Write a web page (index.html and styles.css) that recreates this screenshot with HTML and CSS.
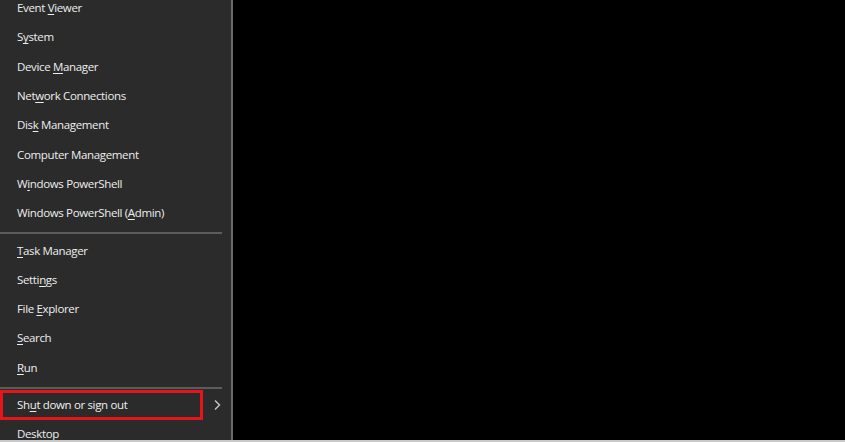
FILE: index.html
```html
<!DOCTYPE html>
<html lang="en">
<head>
    <meta charset="UTF-8">
    <title>Quick Link Menu</title>
    <link rel="stylesheet" href="styles.css">
</head>
<body>
    <div class="screen">
        <nav class="menu">
            <ul class="group">
                <li class="item"><span>Event <u>V</u>iewer</span></li>
                <li class="item"><span>S<u>y</u>stem</span></li>
                <li class="item"><span>Device <u>M</u>anager</span></li>
                <li class="item"><span>Net<u>w</u>ork Connections</span></li>
                <li class="item"><span>Dis<u>k</u> Management</span></li>
                <li class="item"><span>Computer Mana<u>g</u>ement</span></li>
                <li class="item"><span>W<u>i</u>ndows PowerShell</span></li>
                <li class="item"><span>Windows PowerShell (<u>A</u>dmin)</span></li>
            </ul>
            <hr class="divider">
            <ul class="group">
                <li class="item"><span><u>T</u>ask Manager</span></li>
                <li class="item"><span>Setti<u>n</u>gs</span></li>
                <li class="item"><span>File <u>E</u>xplorer</span></li>
                <li class="item"><span><u>S</u>earch</span></li>
                <li class="item"><span><u>R</u>un</span></li>
            </ul>
            <hr class="divider">
            <ul class="group">
                <li class="item item-sub">
                    <span class="highlight"><span>Sh<u>u</u>t down or sign out</span></span>
                    <svg class="chevron" width="8" height="12" viewBox="0 0 8 12" fill="none" stroke="currentColor" stroke-width="1.4">
                        <polyline points="2 1.5 6.5 6 2 10.5"></polyline>
                    </svg>
                </li>
                <li class="item"><span>Desktop</span></li>
            </ul>
        </nav>
        <div class="desktop"></div>
    </div>
</body>
</html>
```

FILE: styles.css
```css
:root {
    --menu-bg: #2b2b2b;
    --menu-text: #eeeeee;
    --rule: #5c5c5c;
    --mark: #e8141b;
}

body {
    margin: 0;
    background: #000;
    font-family: 'Open Sans', 'Liberation Sans', sans-serif;
    overflow: hidden;
}

.screen {
    display: flex;
    width: 845px;
    height: 440px;
    border-bottom: 2px solid #c9c9c9;
    overflow: hidden;
}

.menu {
    width: 231px;
    flex-shrink: 0;
    background-color: var(--menu-bg);
    border-right: 2px solid #6a6a6a;
    margin-top: -8px;
    border-top: 1px solid #4a4636;
}

.desktop {
    flex: 1;
    background: #000;
}

.group {
    list-style: none;
    margin: 0;
    padding: 0;
}

.item {
    height: 29.3px;
    display: flex;
    align-items: center;
    padding-left: 17px;
    font-size: 11.5px;
    color: var(--menu-text);
    letter-spacing: -0.35px;
}

.item u {
    text-underline-offset: 2px;
}

.divider {
    border: none;
    border-top: 2px solid var(--rule);
    margin: 5px 9px 1px 0;
}

.item-sub {
    padding-left: 0;
    justify-content: space-between;
    padding-right: 10px;
}

.highlight {
    box-sizing: border-box;
    width: 203px;
    height: 30px;
    display: flex;
    align-items: center;
    padding-left: 14px;
    border: 3px solid var(--mark);
}

.chevron {
    color: #c8c8c8;
}
```
